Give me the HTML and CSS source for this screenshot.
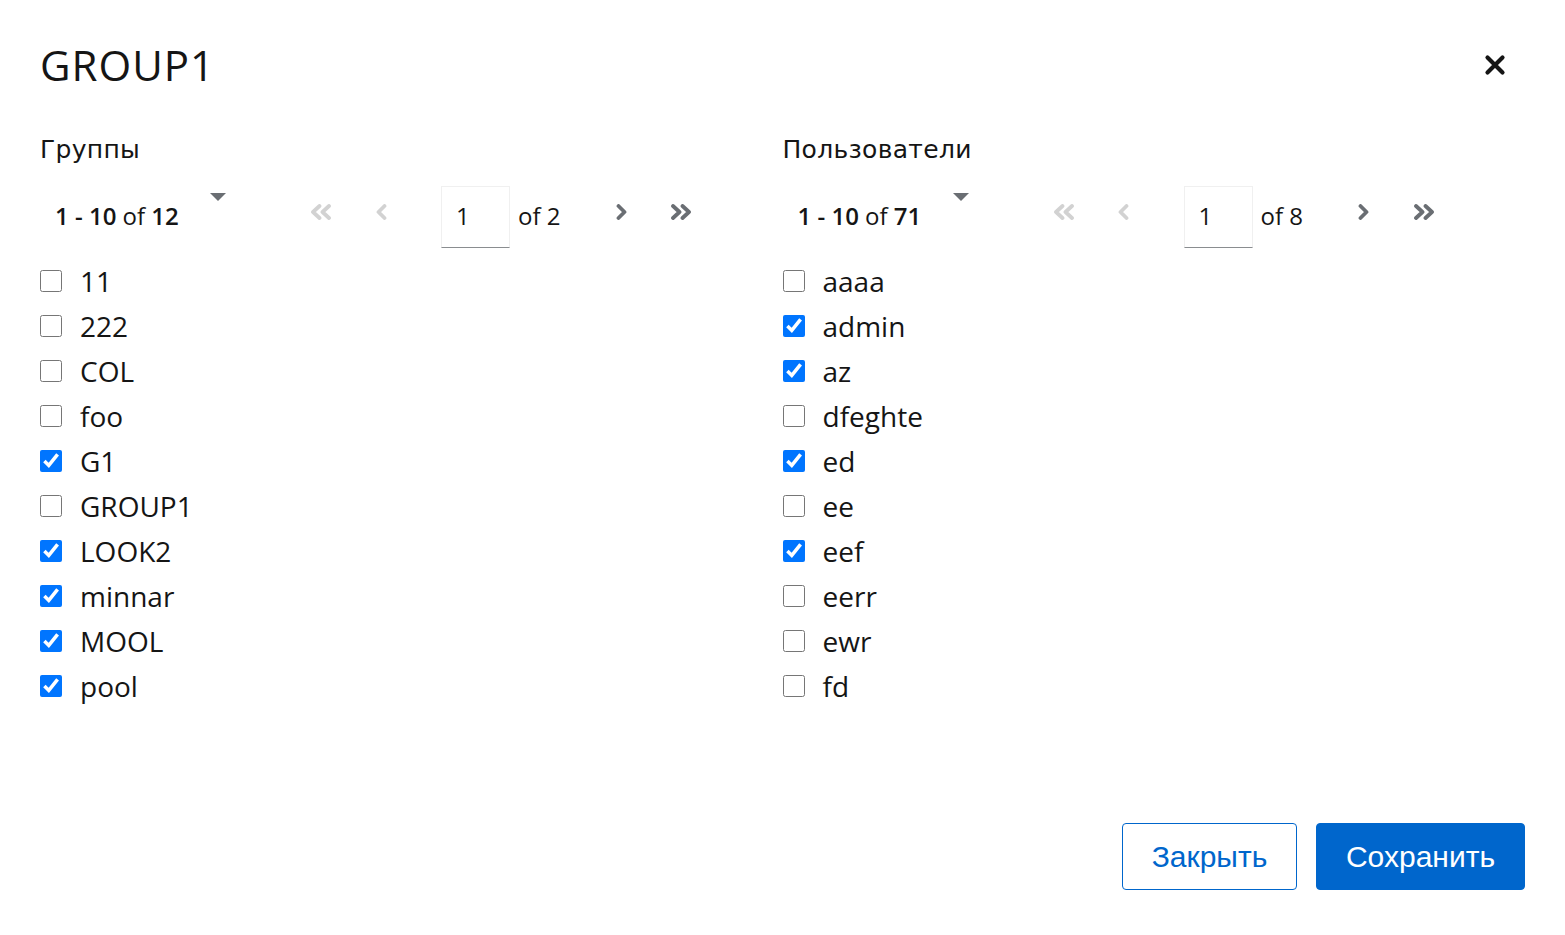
FILE: index.html
```html
<!DOCTYPE html>
<html lang="ru">
<head>
<meta charset="utf-8">
<title>GROUP1</title>
<link rel="stylesheet" href="styles.css">
</head>
<body>
<div class="modal">
  <header class="modal-header">
    <h1 class="modal-title">GROUP1</h1>
    <button class="close-btn" aria-label="Close">
      <svg width="22" height="22" viewBox="0 0 22 22"><path d="M3.5 3.5 L18.5 18.5 M18.5 3.5 L3.5 18.5" stroke="#151515" stroke-width="4.2" stroke-linecap="round"/></svg>
    </button>
  </header>

  <div class="columns">
    <section class="col">
      <h2 class="col-title">Группы</h2>
      <div class="pagination">
        <div class="toggle">
          <span class="toggle-text"><b>1 - 10</b> of <b>12</b></span>
          <svg class="caret" width="16" height="9" viewBox="0 0 16 9"><path d="M0 0 H16 L8 8 Z" fill="#6a6e73"/></svg>
        </div>
        <button class="nav-btn disabled"><svg width="24" height="16" viewBox="0 0 24 16"><path d="M10.5 2 L4 8 L10.5 14 M20 2 L13.5 8 L20 14" fill="none" stroke="currentColor" stroke-width="3.8" stroke-linecap="round" stroke-linejoin="round"/></svg></button>
        <button class="nav-btn disabled"><svg width="13" height="16" viewBox="0 0 13 16"><path d="M9.5 2 L3.5 8 L9.5 14" fill="none" stroke="currentColor" stroke-width="3.8" stroke-linecap="round" stroke-linejoin="round"/></svg></button>
        <div class="page-input">1</div>
        <span class="page-of">of 2</span>
        <button class="nav-btn"><svg width="13" height="16" viewBox="0 0 13 16"><path d="M3.5 2 L9.5 8 L3.5 14" fill="none" stroke="currentColor" stroke-width="3.8" stroke-linecap="round" stroke-linejoin="round"/></svg></button>
        <button class="nav-btn"><svg width="24" height="16" viewBox="0 0 24 16"><path d="M4 2 L10.5 8 L4 14 M13.5 2 L20 8 L13.5 14" fill="none" stroke="currentColor" stroke-width="3.8" stroke-linecap="round" stroke-linejoin="round"/></svg></button>
      </div>
      <ul class="check-list">
        <li><label><input type="checkbox"><span>11</span></label></li>
        <li><label><input type="checkbox"><span>222</span></label></li>
        <li><label><input type="checkbox"><span>COL</span></label></li>
        <li><label><input type="checkbox"><span>foo</span></label></li>
        <li><label><input type="checkbox" checked><span>G1</span></label></li>
        <li><label><input type="checkbox"><span>GROUP1</span></label></li>
        <li><label><input type="checkbox" checked><span>LOOK2</span></label></li>
        <li><label><input type="checkbox" checked><span>minnar</span></label></li>
        <li><label><input type="checkbox" checked><span>MOOL</span></label></li>
        <li><label><input type="checkbox" checked><span>pool</span></label></li>
      </ul>
    </section>

    <section class="col">
      <h2 class="col-title">Пользователи</h2>
      <div class="pagination">
        <div class="toggle">
          <span class="toggle-text"><b>1 - 10</b> of <b>71</b></span>
          <svg class="caret" width="16" height="9" viewBox="0 0 16 9"><path d="M0 0 H16 L8 8 Z" fill="#6a6e73"/></svg>
        </div>
        <button class="nav-btn disabled"><svg width="24" height="16" viewBox="0 0 24 16"><path d="M10.5 2 L4 8 L10.5 14 M20 2 L13.5 8 L20 14" fill="none" stroke="currentColor" stroke-width="3.8" stroke-linecap="round" stroke-linejoin="round"/></svg></button>
        <button class="nav-btn disabled"><svg width="13" height="16" viewBox="0 0 13 16"><path d="M9.5 2 L3.5 8 L9.5 14" fill="none" stroke="currentColor" stroke-width="3.8" stroke-linecap="round" stroke-linejoin="round"/></svg></button>
        <div class="page-input">1</div>
        <span class="page-of">of 8</span>
        <button class="nav-btn"><svg width="13" height="16" viewBox="0 0 13 16"><path d="M3.5 2 L9.5 8 L3.5 14" fill="none" stroke="currentColor" stroke-width="3.8" stroke-linecap="round" stroke-linejoin="round"/></svg></button>
        <button class="nav-btn"><svg width="24" height="16" viewBox="0 0 24 16"><path d="M4 2 L10.5 8 L4 14 M13.5 2 L20 8 L13.5 14" fill="none" stroke="currentColor" stroke-width="3.8" stroke-linecap="round" stroke-linejoin="round"/></svg></button>
      </div>
      <ul class="check-list">
        <li><label><input type="checkbox"><span>aaaa</span></label></li>
        <li><label><input type="checkbox" checked><span>admin</span></label></li>
        <li><label><input type="checkbox" checked><span>az</span></label></li>
        <li><label><input type="checkbox"><span>dfeghte</span></label></li>
        <li><label><input type="checkbox" checked><span>ed</span></label></li>
        <li><label><input type="checkbox"><span>ee</span></label></li>
        <li><label><input type="checkbox" checked><span>eef</span></label></li>
        <li><label><input type="checkbox"><span>eerr</span></label></li>
        <li><label><input type="checkbox"><span>ewr</span></label></li>
        <li><label><input type="checkbox"><span>fd</span></label></li>
      </ul>
    </section>
  </div>

  <footer class="actions">
    <button class="btn btn-secondary">Закрыть</button>
    <button class="btn btn-primary">Сохранить</button>
  </footer>
</div>
</body>
</html>
```

FILE: styles.css
```css
* { box-sizing: border-box; }

html, body {
  margin: 0;
  padding: 0;
  background: #ffffff;
  color: #151515;
  font-family: "Open Sans", "Liberation Sans", sans-serif;
}

.modal {
  min-height: 100vh;
  display: flex;
  flex-direction: column;
  padding: 0 40px 45px 40px;
}

.modal-header {
  display: flex;
  justify-content: space-between;
  align-items: flex-start;
  padding-top: 40px;
}

.modal-title {
  margin: 0;
  font-family: "Open Sans", sans-serif;
  font-weight: 400;
  font-size: 42px;
  line-height: 50px;
  letter-spacing: 1px;
}

.close-btn {
  background: none;
  border: 0;
  padding: 0;
  margin: 14px 19px 0 0;
  width: 22px;
  height: 22px;
  cursor: pointer;
}

.columns {
  display: grid;
  grid-template-columns: 1fr 1fr;
  margin-top: 45px;
}

.col-title {
  margin: 0;
  font-family: "DejaVu Sans", "Liberation Sans", sans-serif;
  font-weight: 400;
  font-size: 25px;
  line-height: 30px;
  letter-spacing: 0.3px;
}

.pagination {
  display: flex;
  align-items: center;
  height: 62px;
  margin-top: 21px;
  font-size: 24px;
}

.toggle {
  display: flex;
  align-items: flex-start;
  width: 251px;
  height: 62px;
  padding-left: 15px;
}

.toggle-text {
  width: 155px;
  align-self: center;
  white-space: nowrap;
  padding-bottom: 4px;
}

.toggle-text b { font-weight: 600; }

.caret {
  margin-top: 7px;
}

.nav-btn {
  width: 60px;
  height: 62px;
  background: none;
  border: 0;
  padding: 0 0 10px 0;
  display: flex;
  align-items: center;
  justify-content: center;
  color: #6a6e73;
}

.nav-btn.disabled { color: #d2d2d2; }

.page-input {
  width: 69px;
  height: 62px;
  margin-left: 30px;
  padding: 0 0 4px 14px;
  display: flex;
  align-items: center;
  border: 1px solid #f0f0f0;
  border-bottom-color: #8a8d90;
  font-size: 24px;
}

.page-of {
  width: 81px;
  padding: 0 0 4px 8px;
  white-space: nowrap;
}

.check-list {
  list-style: none;
  margin: 10px 0 0 0;
  padding: 0;
}

.check-list li {
  height: 45px;
  display: flex;
  align-items: center;
}

.check-list label {
  display: flex;
  align-items: center;
  gap: 18px;
  font-size: 28px;
}

.check-list input {
  width: 22px;
  height: 22px;
  margin: 0;
  accent-color: #0075ff;
}

.actions {
  margin-top: auto;
  display: flex;
  justify-content: flex-end;
  gap: 19px;
}

.btn {
  height: 67px;
  border-radius: 4px;
  font-family: "Liberation Sans", Arial, sans-serif;
  font-size: 30px;
  padding: 0;
  cursor: pointer;
}

.btn-secondary {
  background: #fff;
  color: #0066cc;
  border: 1px solid #0066cc;
  width: 175px;
}

.btn-primary {
  background: #0066cc;
  color: #fff;
  border: 1px solid #0066cc;
  width: 209px;
}
```
